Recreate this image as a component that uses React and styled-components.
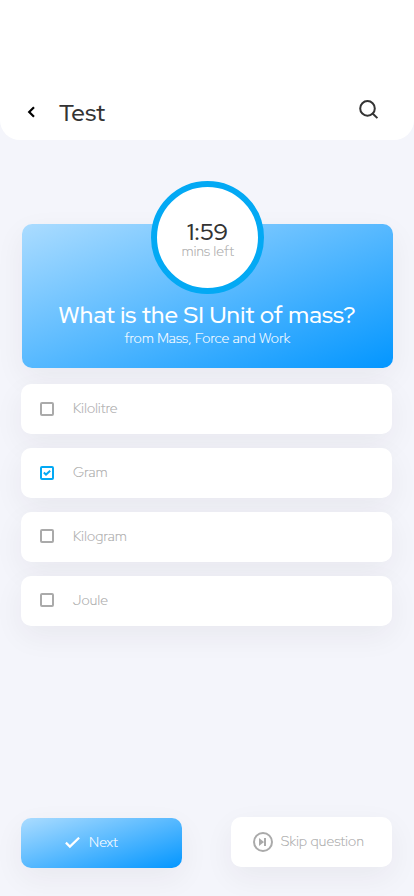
import React from "react";
import styled, { createGlobalStyle } from "styled-components";

const GlobalStyle = createGlobalStyle`
  *, *::before, *::after { box-sizing: border-box; }
  body { margin: 0; background: #f4f5fb; }
`;

const shadow = "0 10px 30px rgba(50, 40, 50, 0.06)";
const gradient = "linear-gradient(to bottom right, #abdcff 0%, #0396ff 100%)";

const Screen = styled.main`
  display: flex;
  flex-direction: column;
  width: 414px;
  height: 896px;
  overflow: hidden;
  background: #f4f5fb;
  font-family: "Red Hat Display", Lato, sans-serif;
  color: #333;
`;

const Header = styled.header`
  display: flex;
  align-items: center;
  height: 140px;
  padding: 84px 35px 0 27px;
  background: #fff;
  border-radius: 0 0 20px 20px;
`;

const IconButton = styled.button`
  display: flex;
  padding: 0;
  border: 0;
  background: none;
  color: ${(p) => p.$color};
  margin: ${(p) => p.$margin || 0};
`;

const PageTitle = styled.h1`
  flex: 1;
  margin: 2px 0 0 24px;
  font-size: 24px;
  line-height: 32px;
  font-weight: 500;
  letter-spacing: 0.15px;
`;

const QuestionCard = styled.section`
  display: flex;
  flex-direction: column;
  align-items: center;
  width: 371px;
  height: 144px;
  margin: 84px 0 0 22px;
  border-radius: 10px;
  background: ${gradient};
  box-shadow: ${shadow};
  color: #fff;
  flex: none;
`;

const Timer = styled.div`
  display: flex;
  flex-direction: column;
  align-items: center;
  width: 113px;
  height: 113px;
  margin-top: -43px;
  padding-top: 33px;
  border: 6px solid #03a9f4;
  border-radius: 50%;
  background: #fff;
  flex: none;
`;

const Time = styled.div`
  font-size: 24px;
  line-height: 24px;
  font-weight: 500;
  letter-spacing: -0.2px;
  color: #333;
`;

const TimeLabel = styled.div`
  padding-left: 1px;
  font-size: 14px;
  line-height: 14px;
  font-weight: 300;
  letter-spacing: 0.25px;
  color: #aaa;
  -webkit-text-stroke: 0.15px currentColor;
`;

const Question = styled.h2`
  margin: 5px 0 0;
  padding-right: 1px;
  font-size: 24px;
  line-height: 32px;
  font-weight: 500;
  letter-spacing: 0.17px;
  white-space: nowrap;
`;

const Topic = styled.p`
  margin: -2px 0 0;
  font-size: 14px;
  line-height: 18px;
  font-weight: 300;
  letter-spacing: 0.21px;
  white-space: nowrap;
  -webkit-text-stroke: 0.15px currentColor;
`;

const Options = styled.div`
  display: flex;
  flex-direction: column;
  gap: 14px;
  margin: 16px 22px 0 21px;
`;

const Option = styled.label`
  display: flex;
  align-items: center;
  height: 50px;
  padding-left: 19px;
  gap: 19px;
  border-radius: 10px;
  background: #fff;
  box-shadow: ${shadow};
`;

const Box = styled.span`
  display: flex;
  align-items: center;
  justify-content: center;
  width: 14px;
  height: 14px;
  margin-top: ${(p) => (p.$raised ? "-2px" : "0")};
  border: 2px solid ${(p) => (p.$checked ? "#03a9f4" : "#aaa")};
  border-radius: 2px;
  color: #03a9f4;
`;

const Label = styled.span`
  margin-top: -2px;
  font-size: 14px;
  line-height: 18px;
  font-weight: 300;
  color: ${(p) => p.$color || "#aaa"};
  letter-spacing: 0.25px;
  white-space: nowrap;
  -webkit-text-stroke: 0.15px currentColor;
`;

const Actions = styled.footer`
  display: flex;
  justify-content: space-between;
  margin: auto 22px 28px 21px;
`;

const Action = styled.button`
  display: flex;
  align-items: center;
  width: 161px;
  height: 50px;
  margin: ${(p) => (p.$primary ? "1px 0 0" : "0 0 1px")};
  padding: 0 0 0 ${(p) => (p.$primary ? "44px" : "22px")};
  gap: ${(p) => (p.$primary ? "9px" : "8px")};
  border: 0;
  border-radius: 10px;
  background: ${(p) => (p.$primary ? gradient : "#fff")};
  box-shadow: ${shadow};
  color: ${(p) => (p.$primary ? "#fff" : "#aaa")};
  font-family: inherit;
`;

const options = [
  { text: "Kilolitre" },
  { text: "Gram", checked: true },
  { text: "Kilogram", raised: true },
  { text: "Joule", raised: true },
];

export default function App() {
  return (
    <Screen>
      <GlobalStyle />
      <Header>
        <IconButton $color="#000" aria-label="Back">
          <svg width="8" height="12" viewBox="0 0 8 12" fill="none" stroke="currentColor" strokeWidth="2.2">
            <path d="M7 1.2 2.2 6 7 10.8" />
          </svg>
        </IconButton>
        <PageTitle>Test</PageTitle>
        <IconButton $color="#333" $margin="-6px 0 0" aria-label="Search">
          <svg width="20" height="20" viewBox="0 0 20 20" fill="none" stroke="currentColor" strokeWidth="2">
            <circle cx="8.5" cy="9.4" r="7.3" />
            <path d="m13.6 14.5 4.8 4.6" />
          </svg>
        </IconButton>
      </Header>
      <QuestionCard>
        <Timer>
          <Time>1:59</Time>
          <TimeLabel>mins left</TimeLabel>
        </Timer>
        <Question>What is the SI Unit of mass?</Question>
        <Topic>from Mass, Force and Work</Topic>
      </QuestionCard>
      <Options>
        {options.map((o) => (
          <Option key={o.text}>
            <Box $checked={o.checked} $raised={o.raised}>
              {o.checked && (
                <svg width="8" height="6" viewBox="0 0 8 6" fill="none" stroke="currentColor" strokeWidth="2">
                  <path d="m.8 2.6 2.2 2L7.2.8" />
                </svg>
              )}
            </Box>
            <Label>{o.text}</Label>
          </Option>
        ))}
      </Options>
      <Actions>
        <Action $primary>
          <svg width="15" height="12" viewBox="0 0 15 12" fill="none" stroke="currentColor" strokeWidth="2.2">
            <path d="m.9 5.6 4 4L14.1.7" />
          </svg>
          <Label $color="#fff">Next</Label>
        </Action>
        <Action>
          <svg width="20" height="20" viewBox="0 0 20 20" fill="none">
            <circle cx="10" cy="10" r="9" stroke="currentColor" strokeWidth="2" />
            <path d="M6 6v8l5-4zM11 6h2v8h-2z" fill="currentColor" />
          </svg>
          <Label>Skip question</Label>
        </Action>
      </Actions>
    </Screen>
  );
}
